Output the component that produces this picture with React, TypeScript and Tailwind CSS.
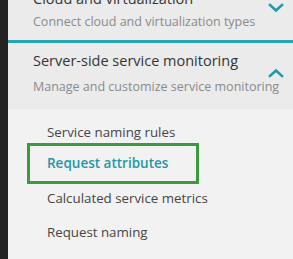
import React from "react";

const Chevron = ({ up }: { up?: boolean }) => (
  <svg width="16" height="10" viewBox="0 0 16 10" className="shrink-0">
    <path
      d={up ? "M2 8 L8 2.5 L14 8" : "M2 2 L8 7.5 L14 2"}
      fill="none"
      stroke="#1e9aa9"
      strokeWidth="2.6"
      strokeLinecap="square"
    />
  </svg>
);

export default function App() {
  const font = { fontFamily: "'Open Sans', 'Noto Sans', sans-serif" };
  return (
    <div className="flex w-[293px] h-[259px] overflow-hidden bg-[#f2f2f2]" style={font}>
      <div className="w-[8px] shrink-0 bg-[#232323]" />
      <div className="flex flex-col flex-1 min-w-0">
        <div className="relative bg-[#ebebeb] h-[40px] pl-[25px] overflow-hidden">
          <div className="mt-[-11px] text-[14.5px] leading-[20px] text-[#353535] whitespace-nowrap">
            Cloud and virtualization
          </div>
          <div className="mt-[4px] text-[12.5px] leading-[18px] text-[#8a8a8a] whitespace-nowrap">
            Connect cloud and virtualization types
          </div>
          <div className="absolute right-[9px] top-[3px]">
            <Chevron />
          </div>
        </div>
        <div className="h-[3px] bg-[#26a6b3]" />
        <div className="relative bg-[#ebebeb] h-[66px] pl-[25px] pt-[8px] overflow-hidden">
          <div className="text-[14.5px] leading-[20px] text-[#353535] whitespace-nowrap">
            Server-side service monitoring
          </div>
          <div className="mt-[7px] text-[12.5px] leading-[18px] text-[#8a8a8a] whitespace-nowrap">
            Manage and customize service monitoring
          </div>
          <div className="absolute right-[9px] top-[25px]">
            <Chevron up />
          </div>
        </div>
        <div className="flex flex-col pt-[7px]">
          <div className="pl-[39px] h-[34px] flex items-center text-[13.3px] text-[#454545] whitespace-nowrap">
            Service naming rules
          </div>
          <div className="ml-[19px] w-[172px] h-[41px] border-[3px] border-[#3c9a3f] pl-[17px] flex items-center text-[13.5px] font-semibold text-[#1f97a8] whitespace-nowrap mt-[-7px] mb-[-2px]">
            Request attributes
          </div>
          <div className="pl-[39px] h-[34px] flex items-center text-[13.3px] text-[#454545] whitespace-nowrap">
            Calculated service metrics
          </div>
          <div className="pl-[39px] h-[34px] flex items-center text-[13.3px] text-[#454545] whitespace-nowrap">
            Request naming
          </div>
        </div>
      </div>
    </div>
  );
}
